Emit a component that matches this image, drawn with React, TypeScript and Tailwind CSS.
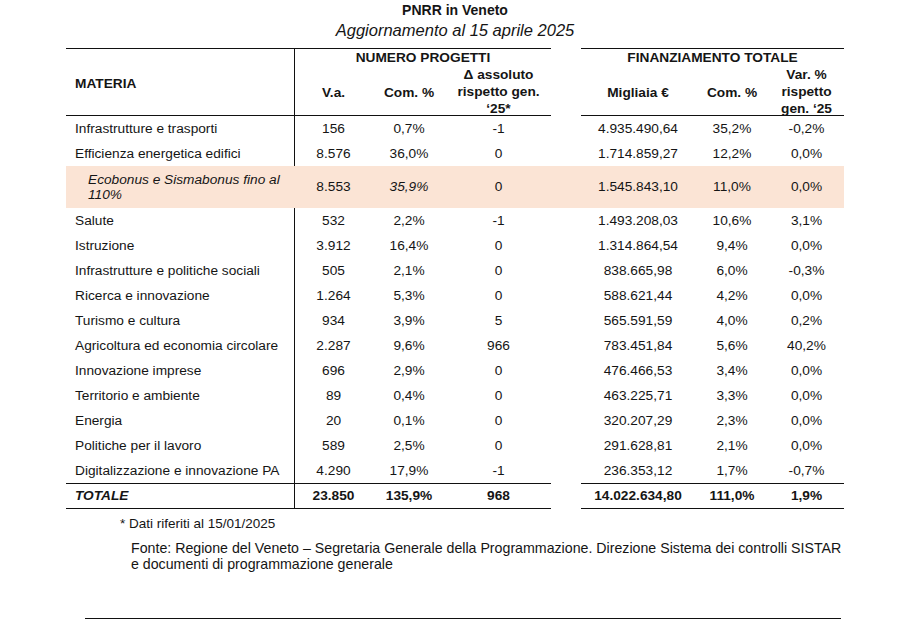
import React from "react";

type Row = {
  name: string;
  va: string;
  com: string;
  delta: string;
  eur: string;
  com2: string;
  varp: string;
};

const rows: Row[] = [
  { name: "Infrastrutture e trasporti", va: "156", com: "0,7%", delta: "-1", eur: "4.935.490,64", com2: "35,2%", varp: "-0,2%" },
  { name: "Efficienza energetica edifici", va: "8.576", com: "36,0%", delta: "0", eur: "1.714.859,27", com2: "12,2%", varp: "0,0%" },
];

const rest: Row[] = [
  { name: "Salute", va: "532", com: "2,2%", delta: "-1", eur: "1.493.208,03", com2: "10,6%", varp: "3,1%" },
  { name: "Istruzione", va: "3.912", com: "16,4%", delta: "0", eur: "1.314.864,54", com2: "9,4%", varp: "0,0%" },
  { name: "Infrastrutture e politiche sociali", va: "505", com: "2,1%", delta: "0", eur: "838.665,98", com2: "6,0%", varp: "-0,3%" },
  { name: "Ricerca e innovazione", va: "1.264", com: "5,3%", delta: "0", eur: "588.621,44", com2: "4,2%", varp: "0,0%" },
  { name: "Turismo e cultura", va: "934", com: "3,9%", delta: "5", eur: "565.591,59", com2: "4,0%", varp: "0,2%" },
  { name: "Agricoltura ed economia circolare", va: "2.287", com: "9,6%", delta: "966", eur: "783.451,84", com2: "5,6%", varp: "40,2%" },
  { name: "Innovazione imprese", va: "696", com: "2,9%", delta: "0", eur: "476.466,53", com2: "3,4%", varp: "0,0%" },
  { name: "Territorio e ambiente", va: "89", com: "0,4%", delta: "0", eur: "463.225,71", com2: "3,3%", varp: "0,0%" },
  { name: "Energia", va: "20", com: "0,1%", delta: "0", eur: "320.207,29", com2: "2,3%", varp: "0,0%" },
  { name: "Politiche per il lavoro", va: "589", com: "2,5%", delta: "0", eur: "291.628,81", com2: "2,1%", varp: "0,0%" },
  { name: "Digitalizzazione e innovazione PA", va: "4.290", com: "17,9%", delta: "-1", eur: "236.353,12", com2: "1,7%", varp: "-0,7%" },
];

const grid = "grid grid-cols-[229px_77px_74px_105px_30px_114px_74px_75px]";

function DataRow({ r }: { r: Row }) {
  return (
    <div className={`${grid} h-[25px] items-stretch`}>
      <div className="border-r border-[#111] pl-[9px] flex items-center">{r.name}</div>
      <div className="flex items-center justify-center">{r.va}</div>
      <div className="flex items-center justify-center">{r.com}</div>
      <div className="flex items-center justify-center">{r.delta}</div>
      <div />
      <div className="flex items-center justify-center">{r.eur}</div>
      <div className="flex items-center justify-center">{r.com2}</div>
      <div className="flex items-center justify-center">{r.varp}</div>
    </div>
  );
}

export default function App() {
  return (
    <div className="w-[907px] h-[621px] bg-white text-[#151515] font-['Liberation_Sans',Arial,sans-serif] overflow-hidden">
      <div className="ml-[66px] w-[778px]">
        <div className="text-center font-bold text-[14px] leading-[20px]">PNRR in Veneto</div>
        <div className="text-center italic text-[16.5px] leading-[20px]">Aggiornamento al 15 aprile 2025</div>

        <div className="mt-[8px] text-[13.7px] leading-[16px]">
          {/* header */}
          <div className={`${grid} grid-rows-[18px_50px]`}>
            <div className="row-span-2 border-t border-b border-r border-[#111] pl-[9px] pt-[3px] flex items-center font-bold">
              MATERIA
            </div>
            <div className="col-span-3 border-t border-[#111] flex items-end justify-center font-bold">
              NUMERO PROGETTI
            </div>
            <div className="row-span-2" />
            <div className="col-span-3 border-t border-[#111] flex items-end justify-center font-bold">
              FINANZIAMENTO TOTALE
            </div>
            <div className="border-b border-[#111] pt-[4px] flex items-center justify-center font-bold">V.a.</div>
            <div className="border-b border-[#111] pt-[4px] flex items-center justify-center font-bold">Com. %</div>
            <div className="border-b border-[#111] pt-[2px] flex items-center justify-center text-center font-bold leading-[17px]">
              Δ assoluto<br />rispetto gen.<br />‘25*
            </div>
            <div className="border-b border-[#111] pt-[4px] flex items-center justify-center font-bold">Migliaia €</div>
            <div className="border-b border-[#111] pt-[4px] flex items-center justify-center font-bold">Com. %</div>
            <div className="border-b border-[#111] pt-[2px] flex items-center justify-center text-center font-bold leading-[17px]">
              Var. %<br />rispetto<br />gen. ‘25
            </div>
          </div>

          {rows.map((r) => (
            <DataRow key={r.name} r={r} />
          ))}

          <div className={`${grid} h-[42px] bg-[#fbe4d5]`}>
            <div className="pl-[22px] pr-[10px] flex items-center italic leading-[15px]">
              Ecobonus e Sismabonus fino al 110%
            </div>
            <div className="flex items-center justify-center">8.553</div>
            <div className="flex items-center justify-center italic">35,9%</div>
            <div className="flex items-center justify-center">0</div>
            <div />
            <div className="flex items-center justify-center">1.545.843,10</div>
            <div className="flex items-center justify-center">11,0%</div>
            <div className="flex items-center justify-center">0,0%</div>
          </div>

          {rest.map((r) => (
            <DataRow key={r.name} r={r} />
          ))}

          <div className={`${grid} h-[26px] font-bold`}>
            <div className="border-t border-b border-r border-[#111] pl-[9px] flex items-center italic">TOTALE</div>
            <div className="border-t border-b border-[#111] flex items-center justify-center">23.850</div>
            <div className="border-t border-b border-[#111] flex items-center justify-center">135,9%</div>
            <div className="border-t border-b border-[#111] flex items-center justify-center">968</div>
            <div />
            <div className="border-t border-b border-[#111] flex items-center justify-center">14.022.634,80</div>
            <div className="border-t border-b border-[#111] flex items-center justify-center">111,0%</div>
            <div className="border-t border-b border-[#111] flex items-center justify-center">1,9%</div>
          </div>
        </div>

        <div className="mt-[7px] ml-[54px] text-[13.5px] leading-[16px]">* Dati riferiti al 15/01/2025</div>
        <div className="mt-[8px] ml-[65px] text-[14.2px] leading-[16px] whitespace-nowrap">
          Fonte: Regione del Veneto – Segretaria Generale della Programmazione. Direzione Sistema dei controlli SISTAR
          <br />e documenti di programmazione generale
        </div>
      </div>
      <div className="mt-[46px] ml-[85px] w-[756px] border-t border-[#111]" />
    </div>
  );
}
